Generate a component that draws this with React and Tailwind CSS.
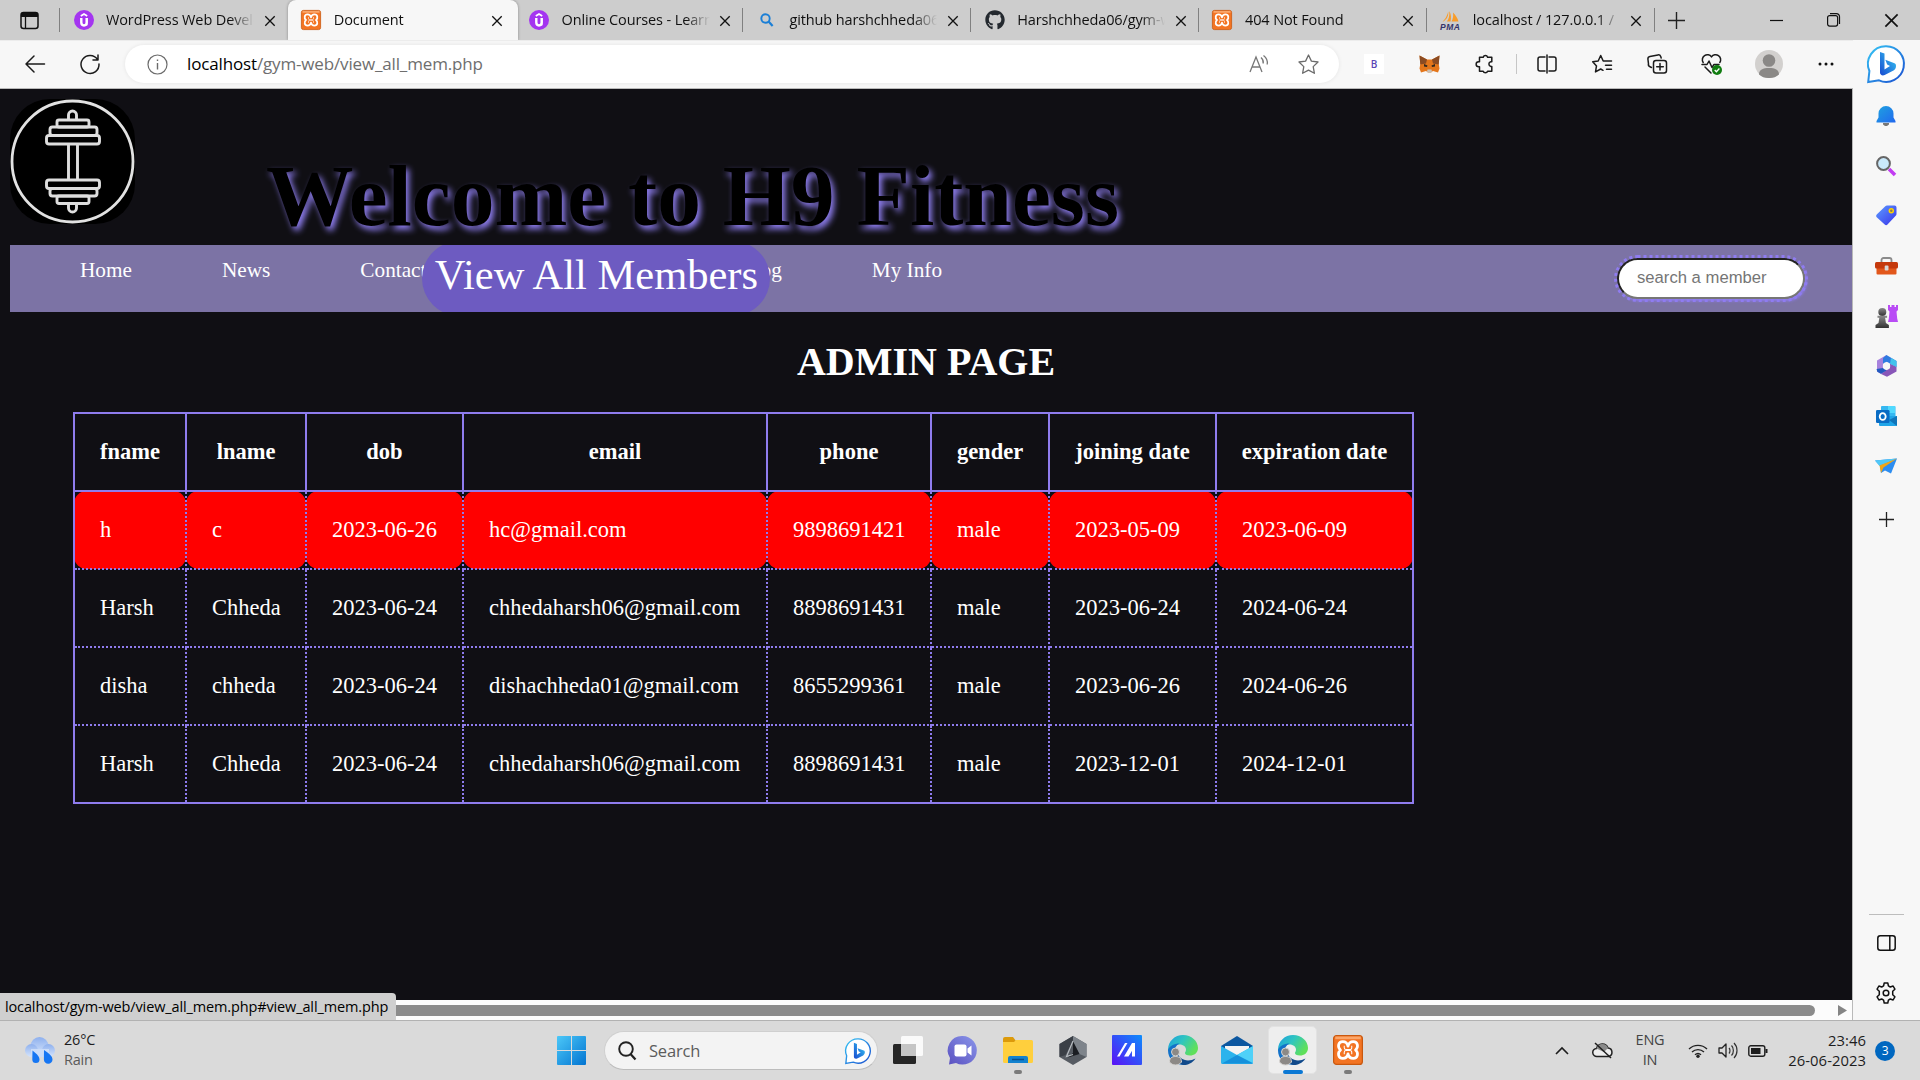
import React from "react";
import { FaGithub } from "react-icons/fa";

const UI = "font-['Open_Sans','Noto_Sans',sans-serif]";

function Svg({ w = 20, h, vb, className = "", children }) {
  const hh = h || w;
  return (
    <svg width={w} height={hh} viewBox={vb || `0 0 ${w} ${hh}`} fill="none" className={`shrink-0 overflow-visible ${className}`}>
      {children}
    </svg>
  );
}

/* Centres an icon in a slot of the given width class */
function Slot({ className = "", children }) {
  return <div className={`flex shrink-0 items-center justify-center ${className}`}>{children}</div>;
}

function UdemyIcon() {
  return (
    <Svg w={20}>
      <circle cx="10" cy="10" r="10" fill="#a435f0" />
      <path d="M6.8 5.9 10 4l3.2 1.9" stroke="#fff" strokeWidth="1.8" />
      <path d="M7.3 8v4.6a2.7 2.9 0 0 0 5.4 0V8" stroke="#fff" strokeWidth="2.4" />
      <path d="M12.7 8v7.4" stroke="#fff" strokeWidth="1.6" />
    </Svg>
  );
}

function XamppIcon({ size = 20 }) {
  return (
    <Svg w={size} vb="0 0 20 20">
      <rect x=".4" y=".4" width="19.2" height="19.2" rx="2" fill="#f37423" stroke="#c9580f" strokeWidth=".8" />
      <path d="M1.5 1h17v1.800h-17z" fill="#fba66a" />
      <path
        d="M10 7.400C9.600 5.500 8.200 4.400 6.500 4.400 3.500 4.400 2.700 8 5 10 2.700 12 3.500 15.600 6.500 15.600 8.200 15.600 9.600 14.500 10 12.600 10.400 14.500 11.800 15.600 13.500 15.600 16.500 15.600 17.300 12 15 10 17.300 8 16.500 4.400 13.500 4.400 11.800 4.400 10.400 5.500 10 7.400Z"
        stroke="#fff"
        strokeWidth="1.800"
        strokeLinejoin="round"
      />
      <path d="M7.500 7.200v1.300a1.200 1.200 0 0 0 1.200 1.200h2.600a1.200 1.200 0 0 0 1.200-1.200V7.200M7.500 12.800v-1.300a1.200 1.200 0 0 1 1.200-1.200h2.600a1.200 1.200 0 0 1 1.200 1.200v1.300" stroke="#fff" strokeWidth=".7" />
    </Svg>
  );
}

function PmaIcon() {
  return (
    <Svg w={21}>
      <path d="M8.200 1.500c.5 4-1 8-5.700 10.500 2-2.500 4.500-5 5.700-10.500ZM9.300 1c1.700 3 2.200 7 1.200 10.500H6.800C9 9 9.600 5.500 9.300 1ZM13 2.500c2.600 2.500 4.600 5.500 5.500 9h-7c1.500-2.600 2-5.600 1.500-9Z" fill="#f89c2a" />
      <text x="0" y="19.500" fontSize="8.500" fontWeight="700" fontStyle="italic" fontFamily="Liberation Sans" fill="#33336b" textLength="20">PMA</text>
    </Svg>
  );
}

function CloseX({ s = 10 }) {
  return (
    <Svg w={s} vb="0 0 10 10">
      <path d="m.3.300 9.400 9.400M9.700.300.3 9.700" stroke="#111" strokeWidth="1.300" />
    </Svg>
  );
}

const tabs = [
  { title: "WordPress Web Development", icon: <UdemyIcon />, sep: true },
  { title: "Document", icon: <XamppIcon />, active: true },
  { title: "Online Courses - Learn Anything", icon: <UdemyIcon /> },
  {
    title: "github harshchheda06 - Search",
    sep: true,
    icon: (
      <Svg w={14}>
        <circle cx="5.500" cy="5.500" r="4.200" stroke="#1b7fd6" strokeWidth="1.900" />
        <path d="m8.600 8.600 4 4.400" stroke="#1b7fd6" strokeWidth="2.200" />
      </Svg>
    ),
  },
  { title: "Harshchheda06/gym-web", icon: <FaGithub size={20} color="#24292f" />, sep: true },
  { title: "404 Not Found", icon: <XamppIcon />, sep: true },
  { title: "localhost / 127.0.0.1 /", icon: <PmaIcon />, sep: true },
];

function Tab({ tab }) {
  const base = "relative flex h-[40px] w-[227.800px] shrink-0 items-center";
  return (
    <div className={tab.active ? `${base} z-10` : base}>
      {tab.active && <div className="absolute inset-y-0 left-[1px] w-[230px] rounded-t-[8px] bg-[#f7f7f7] shadow-[0_0_3px_rgba(0,0,0,0.35)] [clip-path:inset(0_-4px_0_-4px)]" />}
      <div className={tab.sep ? "h-6 w-px bg-[#808080]" : "h-6 w-px"} />
      <Slot className="relative ml-[1px] w-[45px]">{tab.icon}</Slot>
      <div className={`${UI} relative w-[148px] overflow-hidden text-[14.500px] leading-5 tracking-[-0.120px] whitespace-nowrap text-[#111] [mask-image:linear-gradient(to_right,black_124px,transparent_148px)]`}>
        {tab.title}
      </div>
      <Slot className="relative mt-[2px] w-[31px]"><CloseX /></Slot>
    </div>
  );
}

function TabStrip() {
  return (
    <div className="flex h-[40px] shrink-0 items-center bg-[#cdcdcd]">
      <Slot className="w-[59px]">
        <Svg w={19}>
          <rect x="1" y="1.500" width="17" height="16" rx="2.500" stroke="#111" strokeWidth="1.500" />
          <path d="M1 6V3.500a2 2 0 0 1 2-2h13a2 2 0 0 1 2 2V6Z" fill="#111" />
          <path d="M5.500 6v11" stroke="#111" strokeWidth="1.300" />
        </Svg>
      </Slot>
      {tabs.map((t) => <Tab key={t.title} tab={t} />)}
      <div className="h-6 w-px bg-[#808080]" />
      <Slot className="w-[44px]">
        <Svg w={17}><path d="M8.500 0v17M0 8.500h17" stroke="#222" strokeWidth="1.400" /></Svg>
      </Slot>
      <div className="flex-1" />
      <Slot className="w-[57px]"><Svg w={13}><path d="M0 6.500h13" stroke="#111" strokeWidth="1.200" /></Svg></Slot>
      <Slot className="w-[57px]">
        <Svg w={13} h={14}>
          <rect x=".6" y="2.600" width="10" height="10.500" rx="2" stroke="#111" strokeWidth="1.200" />
          <path d="M3 .6h6.500a3 3 0 0 1 3 3V11" stroke="#111" strokeWidth="1.200" />
        </Svg>
      </Slot>
      <Slot className="w-[58px]"><CloseX s={13} /></Slot>
    </div>
  );
}

function BingLogo({ w = 38 }) {
  return (
    <Svg w={w} vb="0 0 38 38">
      <defs>
        <linearGradient id="bingRing" x1="0" y1="0" x2="1" y2="1">
          <stop offset="0" stopColor="#35c5f5" />
          <stop offset="1" stopColor="#1a4fd0" />
        </linearGradient>
        <linearGradient id="bingB" x1="0" y1="1" x2="1" y2="0">
          <stop offset="0" stopColor="#1849cf" />
          <stop offset="1" stopColor="#37cdf5" />
        </linearGradient>
      </defs>
      <path d="M19 1.200a17.800 17.800 0 1 1-7 34.100L1.200 37l1.200-11A17.800 17.800 0 0 1 19 1.200Z" fill="#fff" stroke="url(#bingRing)" strokeWidth="2" />
      <path d="m13 7 4.500 1.600v15.800L23 21l-2.800-1.400-1.900-4.800 9.200 3.400c1.200.5 1.500 1.500 1.500 2.800 0 2.200-1 3.600-2.500 4.500L17.700 30c-2.500 1.200-4.700-.4-4.700-2.500Z" fill="url(#bingB)" />
    </Svg>
  );
}

const line = { stroke: "#1b1b1b", strokeWidth: 1.5, strokeLinejoin: "round", strokeLinecap: "round" };

function Toolbar() {
  return (
    <div className="flex h-[47px] shrink-0 items-center pb-[1px]">
      <Slot className="ml-[7px] w-[56px]">
        <Svg w={20} h={18}><path d="M9 1 1 9l8 8M1 9h18.500" {...line} strokeWidth="1.500" /></Svg>
      </Slot>
      <Slot className="w-[54px]">
        <Svg w={20}><path d="M17.500 5.500A9 9 0 1 0 19 10M18 1v5h-5" {...line} /></Svg>
      </Slot>
      <div className="ml-[8px] flex h-[38px] w-[1217px] items-center rounded-full bg-white shadow-[0_0_4px_rgba(0,0,0,0.08)]">
        <Slot className="w-[64px]">
          <Svg w={21}>
            <circle cx="10.500" cy="10.500" r="9.500" stroke="#6b6b6b" strokeWidth="1.200" />
            <path d="M10.500 9v6.500M10.500 5.500v1.600" stroke="#6b6b6b" strokeWidth="1.400" />
          </Svg>
        </Slot>
        <div className={`${UI} -mt-[1px] -ml-[2px] flex-1 text-[17px] leading-6 tracking-[-0.150px] text-[#6e6e6e]`}>
          <span className="text-black">localhost</span>/gym-web/view_all_mem.php
        </div>
        <Slot className="w-[49px]">
          <Svg w={20} h={18}>
            <path d="M1 17 7 2l6 15M3 12h8M12 2.500c1.800 1.500 2.600 3.800 2.200 6M14.500.500c3 2.200 4.300 5.500 3.700 9" stroke="#777" strokeWidth="1.300" />
          </Svg>
        </Slot>
        <Slot className="mr-[6px] w-[50px]">
          <Svg w={21}>
            <path d="m10.500 1 2.900 6.100 6.600.9-4.800 4.600 1.200 6.700-5.900-3.200-5.900 3.200 1.200-6.700L1 8l6.600-.9Z" stroke="#6b6b6b" strokeWidth="1.300" strokeLinejoin="round" />
          </Svg>
        </Slot>
      </div>
      <Slot className="ml-[7px] w-[56px]">
        <div className={`${UI} flex size-5 items-center justify-center bg-white text-[10px] font-semibold text-[#5a45b5]`}>B</div>
      </Slot>
      <Slot className="w-[55px]">
        <Svg w={21} h={18}>
          <path d="m.5.500 7.500 4h5l7.500-4-.8 8.500.8 4.500-1.500 4-5-1.500-2 1.500H9l-2-1.500-5 1.500-1.500-4L1.300 9Z" fill="#e4761b" />
          <path d="m.5.500 7.500 4-1 4-5.700 1Zm20 0-7.500 4 1 4 5.700 1Z" fill="#8b4b22" />
          <path d="m5 9 3.500 1.500L8 12l-3-.5Zm11 0-3.500 1.500.5 1.500 3-.5Z" fill="#33291f" />
          <path d="M8.500 14.500h4l.5 2-1 1.200H9l-1-1.200Z" fill="#c9c0b6" />
        </Svg>
      </Slot>
      <Slot className="w-[56px]">
        <Svg w={20}>
          <path d="M6 3.200h2.200a2.300 2.300 0 0 1 4.400 0h4.200v4.500h-1a2.400 2.400 0 0 0 0 4.700h1v4.800h-4.200a2.300 2.300 0 0 1-4.400 0H4.500v-4.400H3.700a2.500 2.500 0 0 1 0-5.100h.8V3.200Z" {...line} />
        </Svg>
      </Slot>
      <Slot className="w-[6px]"><div className="h-5 w-px bg-[#c6c6c6]" /></Slot>
      <Slot className="ml-[10px] w-[36px]">
        <Svg w={20}>
          <path d="M8 3H3a2 2 0 0 0-2 2v10a2 2 0 0 0 2 2h5M12 3h5a2 2 0 0 1 2 2v10a2 2 0 0 1-2 2h-5M10 1v18" {...line} />
        </Svg>
      </Slot>
      <Slot className="ml-[9px] w-[56px]">
        <Svg w={21} h={20}>
          <path d="M11 16.300 8.700 15l-5.200 2.900 1-6L.7 7.800l5.500-.8L8.700 1.500 11.200 7h8.300M13.500 11.300h6M14.500 15.300h5" {...line} />
        </Svg>
      </Slot>
      <Slot className="w-[54px]">
        <Svg w={20}>
          <path d="M4.500 13.500 3 12.800a2.500 2.500 0 0 1-1.500-3L.9 5a2.500 2.500 0 0 1 2-2.500l8-1.600a2.500 2.500 0 0 1 2.800 1.600l.5 1.500" {...line} />
          <rect x="6.500" y="6.500" width="13" height="12.500" rx="2.500" {...line} />
          <path d="M13 9.500v6.500M9.700 12.800h6.600" {...line} />
        </Svg>
      </Slot>
      <Slot className="w-[55px]">
        <Svg w={21}>
          <path d="M2.200 8.500a4.700 4.700 0 0 1 8.300-5.600 4.700 4.700 0 0 1 8.300 5.600M1 10.500h5l2-3.500 3 6.500 2-3h5M4 13l6 6" {...line} />
          <circle cx="16" cy="16" r="5" fill="#107c10" />
          <path d="m13.700 16 1.700 1.700 3-3.200" stroke="#fff" strokeWidth="1.300" />
        </Svg>
      </Slot>
      <Slot className="w-[59px]">
        <Svg w={28}>
          <circle cx="14" cy="14" r="14" fill="#d2d0ce" />
          <circle cx="14" cy="10.500" r="6.300" fill="#8a8886" />
          <path d="M4 24.500c0-5 4-6.500 10-6.500s10 1.500 10 6.500A14 14 0 0 1 14 28a14 14 0 0 1-10-3.500Z" fill="#8a8886" />
        </Svg>
      </Slot>
      <Slot className="w-[55px]">
        <Svg w={16} h={4}>
          <circle cx="2" cy="2" r="1.500" fill="#111" /><circle cx="8" cy="2" r="1.500" fill="#111" /><circle cx="14" cy="2" r="1.500" fill="#111" />
        </Svg>
      </Slot>
    </div>
  );
}

function GymLogo() {
  return (
    <Svg w={125} className="rounded-[40px] bg-black">
      <ellipse cx="62.500" cy="62.500" rx="60.500" ry="60.500" stroke="#e2e2e2" strokeWidth="2.800" />
      <g stroke="#dedede" strokeWidth="2.900" strokeLinejoin="round">
        <path d="M58.500 21v-5a4 4 0 0 1 8 0v5M58.500 45v36M67.500 45v36M58.500 104v5a4 4 0 0 0 8 0v-5" />
        <rect x="47" y="21" width="32" height="7" rx="2" />
        <rect x="40" y="28" width="47" height="8.500" rx="2.500" />
        <rect x="36.500" y="36.500" width="53" height="8.500" rx="2.500" />
        <rect x="36.500" y="81" width="53" height="8.500" rx="2.500" />
        <rect x="40" y="89.500" width="47" height="7.500" rx="2.500" />
        <rect x="47" y="97" width="32" height="7.500" rx="2" />
      </g>
    </Svg>
  );
}

const headers = [
  ["fname", "w-[112px]"], ["lname", "w-[120px]"], ["dob", "w-[157px]"], ["email", "w-[304px]"],
  ["phone", "w-[164px]"], ["gender", "w-[118px]"], ["joining date", "w-[167px]"], ["expiration date", "w-[197px]"],
];
const members = [
  ["h", "c", "2023-06-26", "hc@gmail.com", "9898691421", "male", "2023-05-09", "2023-06-09"],
  ["Harsh", "Chheda", "2023-06-24", "chhedaharsh06@gmail.com", "8898691431", "male", "2023-06-24", "2024-06-24"],
  ["disha", "chheda", "2023-06-24", "dishachheda01@gmail.com", "8655299361", "male", "2023-06-26", "2024-06-26"],
  ["Harsh", "Chheda", "2023-06-24", "chhedaharsh06@gmail.com", "8898691431", "male", "2023-12-01", "2024-12-01"],
];

function WebPage() {
  return (
    <main className="flex h-[911px] flex-col overflow-hidden bg-[#100f14] font-['Liberation_Serif',serif] text-white">
      <header className="flex h-[156px] shrink-0 pl-[10px]">
        <div className="pt-[10px]"><GymLogo /></div>
        <h1 className="mt-[57px] ml-[131px] text-[87.500px] leading-[100px] font-bold whitespace-nowrap text-black [text-shadow:3px_4px_6px_#9180f4]">
          Welcome to H9 Fitness
        </h1>
      </header>
      <nav className="ml-[10px] flex h-[67px] shrink-0 gap-[90px] overflow-hidden bg-[#7c73a5] pl-[70px] text-[21.250px] leading-6">
        <a className="pt-[13px]">Home</a>
        <a className="pt-[13px]">News</a>
        <a className="pt-[13px]">Contact</a>
        <div className="relative z-10 w-[134px]">
          <a className="absolute -top-[4px] -left-[94px] flex h-[75px] w-[348px] justify-center rounded-[37.500px] bg-[#6d5bc1] pt-[10px] text-[42.500px] leading-[48px] whitespace-nowrap">
            View All Members
          </a>
        </div>
        <a className="pt-[13px]">Blog</a>
        <a className="pt-[13px]">My Info</a>
        <div className="mt-[13px] mr-[47px] ml-auto h-[41px] w-[188px] rounded-full shadow-[2px_2px_3px_#8f7cf0]">
          <input
            placeholder="search a member"
            className="h-[41px] w-[188px] rounded-full border-2 border-t-[#222] border-r-[#767676] border-b-[#767676] border-l-[#222] bg-white pb-[2px] pl-[18px] font-['Liberation_Sans',sans-serif] text-[16.667px] text-black outline-[3px] outline-[#8f7cf0] outline-dotted placeholder:text-[#757575]"
          />
        </div>
      </nav>
      <h2 className="mt-[27px] shrink-0 text-center text-[40px] leading-[46px] font-bold">ADMIN PAGE</h2>
      <table className="mt-[27px] ml-[73px] w-[1341px] table-fixed border-collapse border-2 border-solid border-[#8f7cee] text-[22.500px] leading-[26px]">
        <thead>
          <tr>
            {headers.map(([h, w]) => (
              <th key={h} className={`${w} h-[78px] border-2 border-solid border-[#8f7cee] p-0 text-center font-bold whitespace-nowrap`}>{h}</th>
            ))}
          </tr>
        </thead>
        <tbody>
          {members.map((row, i) => (
            <tr key={i}>
              {row.map((c, j) => (
                <td key={j} className={`h-[78px] border-2 border-dotted border-[#8f7cee] py-0 pr-0 pl-[25px] whitespace-nowrap ${i === 0 ? "rounded-[12.500px] bg-[#ff0000]" : ""}`}>{c}</td>
              ))}
            </tr>
          ))}
        </tbody>
      </table>
    </main>
  );
}

function Scrollbar() {
  return (
    <div className="relative flex h-[20px] items-center bg-[#fcfcfc]">
      <div className="mt-[1px] h-[11px] w-[1815px] rounded-r-full bg-[#8b8b8b]" />
      <Svg w={9} h={11} className="ml-[23px]"><path d="M0 0 9 5.500 0 11Z" fill="#858585" /></Svg>
      <div className={`${UI} absolute bottom-0 left-0 h-[27px] w-[396px] rounded-tr-[4px] bg-[#cfcfcf] pl-[5px] text-[14.500px] leading-[28px] tracking-[-0.130px] whitespace-nowrap text-black`}>
        localhost/gym-web/view_all_mem.php#view_all_mem.php
      </div>
    </div>
  );
}

function Sidebar() {
  return (
    <aside className="flex w-[67px] shrink-0 flex-col items-center bg-[#f7f7f7] pr-[1px]">
      <Slot className="mt-[2px] h-[44px]"><BingLogo /></Slot>
      <Slot className="mt-[6px] h-[49px]">
        <Svg w={20} h={21}>
          <defs><linearGradient id="bell" x1="0" y1="0" x2="1" y2="1"><stop stopColor="#1fa3e0" /><stop offset="1" stopColor="#2168ee" /></linearGradient></defs>
          <path d="M7 17h6v1.500l-2 1.500H9l-2-1.500Z" fill="#777" />
          <path d="M10 0a7.500 7.500 0 0 1 7.500 7.500v4L19.500 15v1.500H.5V15l2-3.500v-4A7.500 7.500 0 0 1 10 0Z" fill="url(#bell)" />
        </Svg>
      </Slot>
      <Slot className="h-[49px]">
        <Svg w={20}>
          <path d="m13 13 6 6" stroke="#c23cf2" strokeWidth="3.500" />
          <circle cx="7.500" cy="7.500" r="6.400" fill="#c9e9fb" stroke="#666" strokeWidth="2" />
        </Svg>
      </Slot>
      <Slot className="h-[51px]">
        <Svg w={21}>
          <defs><linearGradient id="tag" x1="0" y1="0" x2="1" y2="1"><stop stopColor="#5c9dff" /><stop offset="1" stopColor="#3a32ea" /></linearGradient></defs>
          <path d="M11 .5h7.500a2 2 0 0 1 2 2V9a2.500 2.500 0 0 1-.8 1.800l-8.200 8.800a2 2 0 0 1-2.800 0L.7 12.300a2 2 0 0 1 0-2.800L9.300 1.200A2.500 2.500 0 0 1 11 .5Z" fill="url(#tag)" />
          <circle cx="15.300" cy="5.800" r="2" fill="#8a7a5c" stroke="#ffd200" strokeWidth="1.500" />
        </Svg>
      </Slot>
      <Slot className="h-[50px]">
        <Svg w={23} h={18}>
          <path d="M6.500 5V3a2 2 0 0 1 2-2h6a2 2 0 0 1 2 2v2" stroke="#8b8b8b" strokeWidth="1.800" />
          <rect x="1.500" y="8" width="20" height="9.500" rx="1" fill="#e2571b" />
          <rect x="0" y="5" width="23" height="6.500" rx="1.500" fill="#c5390c" />
          <rect x="9.700" y="8.500" width="3.800" height="5" rx="1" fill="#d7d7d7" />
        </Svg>
      </Slot>
      <Slot className="h-[50px]">
        <Svg w={23}>
          <defs><linearGradient id="pawn" x1="0" y1="0" x2="0" y2="1"><stop stopColor="#8a8a8a" /><stop offset="1" stopColor="#333" /></linearGradient></defs>
          <path d="M13 0h2v2h1.500V0h3v2H21V0h2v5l-1.500 1.500.7 7 .8 3.500H13l.8-3.500.7-7L13 5Z" fill="#b94cf5" />
          <circle cx="7.300" cy="7" r="4" fill="url(#pawn)" />
          <path d="M2.500 10.800h9.600v2h-2l.8 5.200 3 2v3H.5v-3l3-2 .8-5.200H2.500Z" fill="url(#pawn)" />
        </Svg>
      </Slot>
      <Slot className="h-[50px]">
        <Svg w={21} h={22}>
          <path d="M10.500 0 1 5.500v11L5 19l5.500-3.500V15L7 13V9l3.500-2Z" fill="#a782dd" />
          <path d="M10.500 0 20.500 6v6L14 8.800l-3.500-2L7 9V3Z" fill="#2f7be0" />
          <path d="M20.500 8v8.500l-9.500 5.300L5 19l5.500-4 3.500-2V8.800l6.500 3Z" fill="#8856b8" />
          <path d="m.5 14 6.500-1 3.500 2.500L5 18.700l-3.700-2Z" fill="#235ac0" />
          <path d="m15 3 5.500 3v6L14 8.800Z" fill="#43c2ec" />
          <circle cx="10.500" cy="11" r="3.700" fill="#f7f7f7" />
        </Svg>
      </Slot>
      <Slot className="h-[50px]">
        <Svg w={21} h={20}>
          <rect x="5" y="0" width="14.500" height="14" rx="1" fill="#35b8f1" />
          <path d="M12 0h7v7h-7Z" fill="#50d9ff" />
          <path d="M3 10h18v9a1 1 0 0 1-1 1H4a1 1 0 0 1-1-1Z" fill="#1fa5e8" />
          <path d="m21 10-8 4 8 6Z" fill="#1075ba" />
          <rect x="0" y="4" width="13.500" height="13" rx="1.200" fill="#0a6cc4" />
          <ellipse cx="6.700" cy="10.500" rx="3" ry="3.400" stroke="#fff" strokeWidth="1.800" />
        </Svg>
      </Slot>
      <Slot className="h-[50px]">
        <Svg w={22} h={16}>
          <path d="M0 2.500 22 .5 16 15.500l-6-3L6 15 5 8Z" fill="#2d8df0" />
          <path d="M0 2.500 22 .5 4.500 8Z" fill="#50c8f7" />
          <path d="M22 .5 4.500 7.500 6 15l2.500-5.500Z" fill="#f2a516" />
        </Svg>
      </Slot>
      <Slot className="mt-[3px] h-[50px]">
        <Svg w={15}><path d="M7.500 0v15M0 7.500h15" stroke="#222" strokeWidth="1.300" /></Svg>
      </Slot>
      <div className="mt-auto h-px w-[35px] bg-[#bdbdbd]" />
      <Slot className="mt-[3px] h-[50px]">
        <Svg w={19} h={16}>
          <rect x=".8" y=".8" width="17.400" height="14.400" rx="2.500" stroke="#111" strokeWidth="1.500" />
          <path d="M12.800.8v14.400" stroke="#111" strokeWidth="1.500" />
        </Svg>
      </Slot>
      <Slot className="mb-[2px] h-[50px]">
        <Svg w={22}>
          <path
            d="M9.200 1h3.600l.6 2.900 1.900 1.100 2.800-1 1.800 3.200L17.700 9.200v3.600l2.200 2-1.800 3.200-2.800-1-1.900 1.100-.6 2.900H9.200l-.6-2.900L6.700 17l-2.800 1-1.800-3.200 2.200-2V9.200l-2.200-2L3.900 4l2.800 1 1.900-1.100Z"
            stroke="#111" strokeWidth="1.500" strokeLinejoin="round"
          />
          <circle cx="11" cy="11" r="2.800" stroke="#111" strokeWidth="1.500" />
        </Svg>
      </Slot>
    </aside>
  );
}

function EdgeProfileIcon({ id }) {
  return (
    <Svg w={31} h={30}>
      <defs>
        <linearGradient id={id} x1="0" y1="0" x2="1" y2=".5"><stop stopColor="#1b9de0" /><stop offset=".5" stopColor="#2fc5c0" /><stop offset="1" stopColor="#5fe05a" /></linearGradient>
      </defs>
      <path d="M1 15C1 6 8 0 16 0c8.500 0 15 6 15 13 0 5-4 7.500-8 7.500-3.500 0-5-1.200-5-2.500 0-1 1-1.500 1-3.500 0-2.500-2.500-5-6.500-5C7 9.500 2.500 12.500 1 17Z" fill={`url(#${id})`} />
      <path d="M1 15c1.500-4 6-6.500 11.500-6.500-3.500 1.500-5 5-5 8C7.500 22 12 28 19 29.500 9 31.500 1 25 1 15Z" fill="#1472c9" />
      <path d="M11 16c-1 6 5 9.500 10 9.500 3 0 5-.7 7.500-2C25 29 19 30.500 16 30c-6-1-8-8-5-14Z" fill="#114a8b" />
      <circle cx="8.500" cy="17" r="4" fill="#8c8986" stroke="#d6d4d2" strokeWidth="1" />
      <path d="M2.500 27c0-4 2.500-5.500 6-5.500s6 1.500 6 5.500c-1.500 2-3.500 3-6 3s-4.500-1-6-3Z" fill="#8c8986" stroke="#d6d4d2" strokeWidth="1" />
    </Svg>
  );
}

/* One pinned application, with an optional running mark under it */
function Pin({ className = "w-[55px]", mark, children }) {
  return (
    <div className={`relative flex h-[59px] shrink-0 items-center justify-center ${className}`}>
      {mark === "active" && <div className="absolute inset-x-[3px] top-[5px] h-[48px] rounded-[5px] border border-[#e2e2e2] bg-[#eeeeee]" />}
      <div className="relative mt-[-1px]">{children}</div>
      {mark === "dot" && <div className="absolute bottom-[6px] h-[4px] w-[8px] rounded-full bg-[#7a7a7a]" />}
      {mark === "active" && <div className="absolute bottom-[6px] h-[4px] w-[20px] rounded-full bg-[#0b78d4]" />}
    </div>
  );
}

function Taskbar() {
  return (
    <footer className={`${UI} flex h-[60px] shrink-0 items-center border-t border-[#b2b2b2] bg-[#dadada] text-[14.500px] leading-5 tracking-[-0.200px] text-[#1d1d1d]`}>
      <div className="flex w-[544px] items-center pl-[25px]">
        <Svg w={30} h={27}>
          <defs><linearGradient id="cloud" x1="0" y1="0" x2="0" y2="1"><stop stopColor="#8eb0ee" /><stop offset="1" stopColor="#d5e4fb" /></linearGradient></defs>
          <circle cx="14.500" cy="9" r="9" fill="url(#cloud)" /><circle cx="6.500" cy="13.500" r="6.500" fill="url(#cloud)" /><circle cx="23.500" cy="13.500" r="6.500" fill="url(#cloud)" />
          <rect x="6" y="12" width="18" height="8" fill="#cbdcf8" />
          <path d="M7.500 13.500c5 4 7 6 7 9a3.600 3.600 0 0 1-7.200 0ZM19 13c6 4 8.500 6.500 8.500 9.500a4.300 4.300 0 0 1-8.600 0Z" fill="#1676f3" />
        </Svg>
        <div className="-mt-[2px] ml-[9px]">
          <div>26°C</div>
          <div className="text-[#5a5a5a]">Rain</div>
        </div>
      </div>
      <Pin>
        <Svg w={29}>
          <defs><linearGradient id="win" x1="0" y1="0" x2="1" y2="1"><stop stopColor="#4cc8f8" /><stop offset="1" stopColor="#0274d1" /></linearGradient></defs>
          <path d="M1 0h13v14H0V1a1 1 0 0 1 1-1ZM15 0h13a1 1 0 0 1 1 1v13H15ZM0 15h14v14H1a1 1 0 0 1-1-1ZM15 15h14v13a1 1 0 0 1-1 1H15Z" fill="url(#win)" />
        </Svg>
      </Pin>
      <div className="ml-[5px] flex h-[39px] w-[274px] shrink-0 items-center rounded-full border border-[#cfcfcf] border-b-[#bcbcbc] bg-[#f3f3f3] pr-[6px] pl-[12px]">
        <Svg w={20}>
          <circle cx="9" cy="8" r="6.800" stroke="#222" strokeWidth="1.900" />
          <path d="m13.500 13 5 5.500" stroke="#222" strokeWidth="2.200" />
        </Svg>
        <span className="ml-[12px] flex-1 text-[16.500px] text-[#5c5c5c]">Search</span>
        <BingLogo w={26} />
      </div>
      <Pin className="ml-[2px] w-[55px]">
        <Svg w={30} h={28}>
          <rect x="0" y="8" width="23" height="20" rx="1.500" fill="#262626" />
          <rect x="8" y="0" width="22" height="20" rx="1.500" fill="#fafafa" />
          <rect x="8" y="8" width="15" height="12" fill="#c5c5c5" />
        </Svg>
      </Pin>
      <Pin>
        <Svg w={29} h={29}>
          <defs><linearGradient id="chat" x1="1" y1="0" x2="0" y2="1"><stop stopColor="#8a96ea" /><stop offset="1" stopColor="#5a50c0" /></linearGradient></defs>
          <path d="M14.500 0A14.300 14.300 0 1 1 8 27L1 28.500 2 22A14.300 14.300 0 0 1 14.500 0Z" fill="url(#chat)" />
          <rect x="6.500" y="8.500" width="12" height="12" rx="2" fill="#fff" />
          <path d="m19.500 12.500 4-3v10l-4-3Z" fill="#fff" />
        </Svg>
      </Pin>
      <Pin mark="dot" className="w-[56px]">
        <Svg w={30} h={26}>
          <path d="M0 2a2 2 0 0 1 2-2h8l3 4v6H0Z" fill="#dc9a0b" />
          <path d="M0 5 11 5l2-2h15.500A1.500 1.500 0 0 1 30 4.500v20A1.500 1.500 0 0 1 28.500 26h-27A1.500 1.500 0 0 1 0 24.500Z" fill="#ffcf3d" />
          <path d="M5 26v-5a2 2 0 0 1 2-2h16a2 2 0 0 1 2 2v5Z" fill="#1382cf" />
          <path d="M9 22.500h12" stroke="#0a4f8c" strokeWidth="1.500" />
        </Svg>
      </Pin>
      <Pin className="w-[53px]">
        <Svg w={28} h={29}>
          <path d="m14 0 13.500 8v13L14 29 .5 21V8Z" fill="#565b62" />
          <path d="M14 0 .5 8v13l6-2L14 5Z" fill="#3a3f46" />
          <path d="m14 0 13.500 8v13L20.500 18 14 5Z" fill="#7e848b" />
          <path d="M14 5.500 20.500 18 9 21.500l5-4.500Z" fill="#1a1d22" />
          <path d="M14 5 7.500 20.500l6.500-2" stroke="#b7bcc1" strokeWidth="1.200" />
        </Svg>
      </Pin>
      <Pin className="w-[56px]">
        <Svg w={30}>
          <defs><linearGradient id="asus" x1="0" y1="1" x2="1" y2="0"><stop stopColor="#5b10f5" /><stop offset="1" stopColor="#0d8dfc" /></linearGradient></defs>
          <rect width="30" height="30" rx="1" fill="url(#asus)" />
          <path d="M5 21.500 13 8h2.500l-8 13.500ZM12 21.500 20 8h3v3l-6.500 10.500ZM20 14l3-3v10.500h-3Z" fill="#fff" />
        </Svg>
      </Pin>
      <Pin className="w-[54px]"><EdgeProfileIcon id="edgeA" /></Pin>
      <Pin className="w-[56px]">
        <Svg w={32} h={28}>
          <path d="M0 10 16 0l16 10v4H0Z" fill="#0c57a0" />
          <path d="M4 10h24v10H4Z" fill="#f3f3f3" />
          <path d="M0 10l16 9 16-9v16.500a1.500 1.500 0 0 1-1.500 1.500h-29A1.500 1.500 0 0 1 0 26.500Z" fill="#2bb3ec" />
          <path d="m16 19 16-9v17Z" fill="#4fd1f8" /><path d="m16 19 16 8.500H1Z" fill="#1590db" />
        </Svg>
      </Pin>
      <Pin className="w-[55px]" mark="active"><EdgeProfileIcon id="edgeB" /></Pin>
      <Pin className="w-[55px]" mark="dot"><XamppIcon size={30} /></Pin>
      <div className="flex-1" />
      <div className="flex h-full shrink-0 items-center">
        <Svg w={14} h={8} className="mr-[23px]"><path d="m1 7 6-6 6 6" stroke="#1d1d1d" strokeWidth="1.600" /></Svg>
        <Svg w={21} h={17}>
          <path d="M5 14.500a4 4 0 0 1-.5-8A6 6 0 0 1 16 6a4.300 4.300 0 0 1 .5 8.500Z" fill="#eee" stroke="#222" strokeWidth="1.500" />
          <path d="M4.500 6.500A6 6 0 0 1 16 6l-4 4Z" fill="#8a8a8a" />
          <path d="m3 1 16 15" stroke="#1d1d1d" strokeWidth="1.500" />
        </Svg>
        <div className="-mt-[1px] ml-[18px] w-[38px] text-center text-[#444]"><div>ENG</div><div>IN</div></div>
        <Svg w={20} h={15} className="ml-[19px]">
          <path d="M1 6a13 13 0 0 1 18 0M4 9a8.700 8.700 0 0 1 12 0M7 11.800a4.500 4.500 0 0 1 6 0" stroke="#222" strokeWidth="1.400" />
          <circle cx="10" cy="13.200" r="1.700" fill="#222" />
        </Svg>
        <Svg w={20} h={17} className="ml-[10px]">
          <path d="M1 6h3l4-4v13l-4-4H1Z" stroke="#222" strokeWidth="1.300" strokeLinejoin="round" />
          <path d="M11 6c1.300 1.300 1.300 4 0 5.500M13.500 3.500c2.500 2.500 2.500 7.500 0 10M16 1c4 4 4 11 0 15" stroke="#333" strokeWidth="1.200" />
        </Svg>
        <Svg w={20} h={12} className="ml-[10px]">
          <rect x=".8" y=".8" width="16" height="10.400" rx="2" stroke="#1d1d1d" strokeWidth="1.400" />
          <rect x="3" y="3" width="9.500" height="6" fill="#1d1d1d" />
          <path d="M17.500 4h2v4h-2Z" fill="#1d1d1d" />
        </Svg>
        <div className="-mt-[2px] ml-[20px] w-[78px] text-right text-[14.800px] tracking-[0.050px] whitespace-nowrap"><div>23:46</div><div>26-06-2023</div></div>
        <div className="mr-[25px] ml-[9px] flex size-5 items-center justify-center rounded-full bg-[#0067c0] text-[12px] text-white">3</div>
      </div>
    </footer>
  );
}

export default function App() {
  return (
    <div className="flex h-[1080px] w-[1920px] flex-col overflow-hidden bg-[#f7f7f7]">
      <TabStrip />
      <div className="flex h-[980px] shrink-0">
        <div className="flex w-[1853px] shrink-0 flex-col border-t border-t-[#ececec]">
          <Toolbar />
          <div className="border-t border-r border-[#b9b9b9]">
            <WebPage />
            <Scrollbar />
          </div>
        </div>
        <Sidebar />
      </div>
      <Taskbar />
    </div>
  );
}
